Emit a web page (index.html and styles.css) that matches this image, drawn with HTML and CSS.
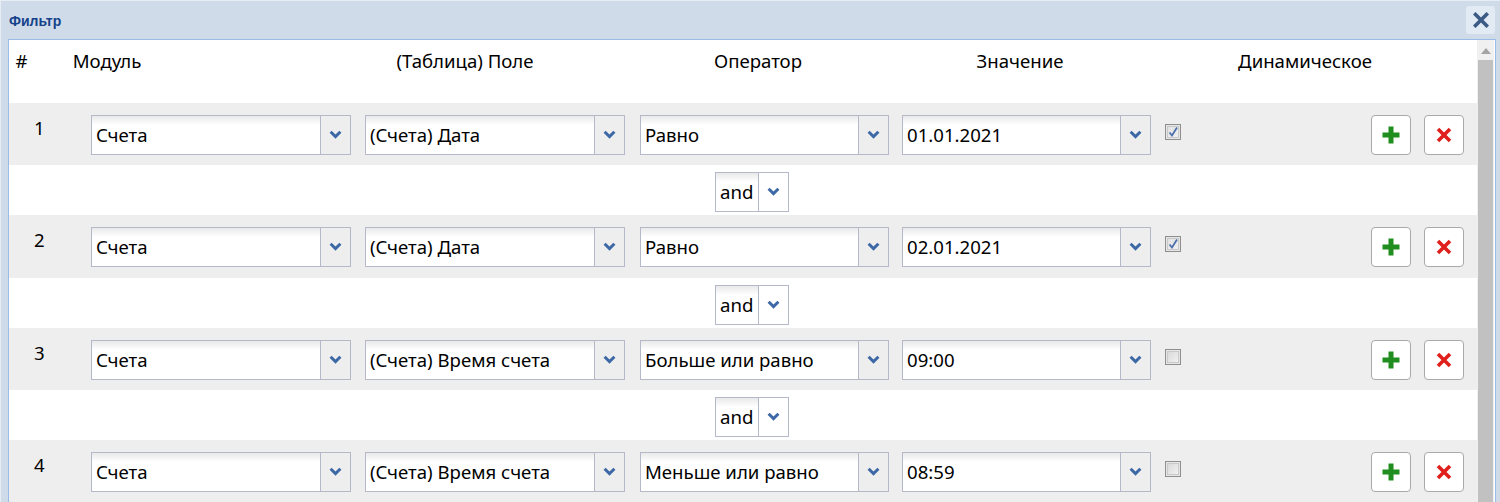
FILE: index.html
```html
<!DOCTYPE html>
<html lang="ru">
<head>
<meta charset="utf-8">
<title>Фильтр</title>
<link rel="stylesheet" href="styles.css">
</head>
<body>
<div class="window">
  <div class="titlebar">
    <span class="title">Фильтр</span>
    <button class="close" type="button" aria-label="Закрыть">
      <svg width="16" height="16" viewBox="0 0 16 16"><path d="M2.5 2.5L13.5 13.5M13.5 2.5L2.5 13.5" stroke="#3b5b86" stroke-width="3.6" stroke-linecap="square" fill="none"/></svg>
    </button>
  </div>
  <div class="panel">
    <div class="content">
      <div class="head">
        <div class="h h-num">#</div>
        <div class="h h-mod">Модуль</div>
        <div class="h h-field">(Таблица) Поле</div>
        <div class="h h-op">Оператор</div>
        <div class="h h-val">Значение</div>
        <div class="h h-dyn">Динамическое</div>
      </div>

      <div class="row">
        <div class="num">1</div>
        <div class="combo c-mod"><span class="val">Счета</span><span class="trig"></span></div>
        <div class="combo c-field"><span class="val">(Счета) Дата</span><span class="trig"></span></div>
        <div class="combo c-op"><span class="val">Равно</span><span class="trig"></span></div>
        <div class="combo c-val"><span class="val">01.01.2021</span><span class="trig"></span></div>
        <div class="chk checked"><svg width="12" height="12" viewBox="0 0 12 12"><path d="M2.5 6.5L5 9.5L10 1.5" stroke="#4d6fae" stroke-width="1.8" fill="none"/></svg></div>
        <div class="spacer"></div>
        <button class="btn" type="button"><svg width="20" height="20" viewBox="0 0 20 20"><path d="M10 1.5V18.5M1.5 10H18.5" stroke="#1f8e1f" stroke-width="5" fill="none"/></svg></button>
        <button class="btn btn-del" type="button"><svg width="16" height="16" viewBox="0 0 16 16"><path d="M2 2L14 14M14 2L2 14" stroke="#e0201c" stroke-width="3.6" fill="none"/></svg></button>
      </div>
      <div class="link">
        <div class="combo c-and"><span class="val">and</span><span class="trig"></span></div>
      </div>

      <div class="row row-tall">
        <div class="num">2</div>
        <div class="combo c-mod"><span class="val">Счета</span><span class="trig"></span></div>
        <div class="combo c-field"><span class="val">(Счета) Дата</span><span class="trig"></span></div>
        <div class="combo c-op"><span class="val">Равно</span><span class="trig"></span></div>
        <div class="combo c-val"><span class="val">02.01.2021</span><span class="trig"></span></div>
        <div class="chk checked"><svg width="12" height="12" viewBox="0 0 12 12"><path d="M2.5 6.5L5 9.5L10 1.5" stroke="#4d6fae" stroke-width="1.8" fill="none"/></svg></div>
        <div class="spacer"></div>
        <button class="btn" type="button"><svg width="20" height="20" viewBox="0 0 20 20"><path d="M10 1.5V18.5M1.5 10H18.5" stroke="#1f8e1f" stroke-width="5" fill="none"/></svg></button>
        <button class="btn btn-del" type="button"><svg width="16" height="16" viewBox="0 0 16 16"><path d="M2 2L14 14M14 2L2 14" stroke="#e0201c" stroke-width="3.6" fill="none"/></svg></button>
      </div>
      <div class="link">
        <div class="combo c-and"><span class="val">and</span><span class="trig"></span></div>
      </div>

      <div class="row">
        <div class="num">3</div>
        <div class="combo c-mod"><span class="val">Счета</span><span class="trig"></span></div>
        <div class="combo c-field"><span class="val">(Счета) Время счета</span><span class="trig"></span></div>
        <div class="combo c-op"><span class="val">Больше или равно</span><span class="trig"></span></div>
        <div class="combo c-val"><span class="val">09:00</span><span class="trig"></span></div>
        <div class="chk"></div>
        <div class="spacer"></div>
        <button class="btn" type="button"><svg width="20" height="20" viewBox="0 0 20 20"><path d="M10 1.5V18.5M1.5 10H18.5" stroke="#1f8e1f" stroke-width="5" fill="none"/></svg></button>
        <button class="btn btn-del" type="button"><svg width="16" height="16" viewBox="0 0 16 16"><path d="M2 2L14 14M14 2L2 14" stroke="#e0201c" stroke-width="3.6" fill="none"/></svg></button>
      </div>
      <div class="link">
        <div class="combo c-and"><span class="val">and</span><span class="trig"></span></div>
      </div>

      <div class="row">
        <div class="num">4</div>
        <div class="combo c-mod"><span class="val">Счета</span><span class="trig"></span></div>
        <div class="combo c-field"><span class="val">(Счета) Время счета</span><span class="trig"></span></div>
        <div class="combo c-op"><span class="val">Меньше или равно</span><span class="trig"></span></div>
        <div class="combo c-val"><span class="val">08:59</span><span class="trig"></span></div>
        <div class="chk"></div>
        <div class="spacer"></div>
        <button class="btn" type="button"><svg width="20" height="20" viewBox="0 0 20 20"><path d="M10 1.5V18.5M1.5 10H18.5" stroke="#1f8e1f" stroke-width="5" fill="none"/></svg></button>
        <button class="btn btn-del" type="button"><svg width="16" height="16" viewBox="0 0 16 16"><path d="M2 2L14 14M14 2L2 14" stroke="#e0201c" stroke-width="3.6" fill="none"/></svg></button>
      </div>
    </div>
    <div class="scrollbar">
      <div class="sb-up"><svg width="10" height="6" viewBox="0 0 10 6"><path d="M0 6L5 0L10 6Z" fill="#a3a3a3"/></svg></div>
      <div class="sb-thumb"></div>
    </div>
  </div>
</div>
</body>
</html>
```

FILE: styles.css
```css
* { box-sizing: border-box; }
html, body { margin: 0; padding: 0; }
body {
  width: 1500px;
  height: 502px;
  overflow: hidden;
  background: #cfdbe8;
  font-family: "Noto Sans", "Open Sans", sans-serif;
  font-size: 18.6px;
  color: #000;
}
.window {
  width: 1500px;
  height: 502px;
  border-top: 1px solid #e6edf5;
  border-left: 1px solid #e6edf5;
  background: #cfdbe8;
  overflow: hidden;
}
.titlebar {
  height: 38px;
  display: flex;
  align-items: center;
  justify-content: space-between;
  padding-left: 8px;
  padding-right: 5px;
}
.title {
  font-family: "Liberation Sans", Arial, sans-serif;
  font-weight: bold;
  font-size: 14px;
  color: #15428b;
  margin-top: 2px;
}
.close {
  width: 29px;
  height: 28px;
  margin-top: -1px;
  border: none;
  border-radius: 3px;
  background: #e2eaf4;
  padding: 0;
  display: flex;
  align-items: center;
  justify-content: center;
}
.panel {
  margin-left: 7px;
  width: 1488px;
  height: 470px;
  border-top: 1px solid #99bbe8;
  border-left: 1px solid #99bbe8;
  border-right: 1px solid #99bbe8;
  background: #fff;
  display: flex;
}
.content {
  width: 1468px;
  flex: none;
}
.scrollbar {
  width: 17px;
  flex: none;
  background: #f0f0f0;
  display: flex;
  flex-direction: column;
}
.sb-up {
  height: 20px;
  display: flex;
  align-items: center;
  justify-content: center;
  padding-top: 2px;
}
.sb-thumb {
  flex: 1;
  margin: 0 1px;
  background: #c1c1c1;
}
.head {
  height: 63px;
  display: flex;
  align-items: flex-start;
  padding-top: 8px;
  line-height: 26px;
}
.h { text-align: center; flex: none; white-space: nowrap; }
.h-num { width: 25px; }
.h-mod { width: 146px; }
.h-field { width: 200px; margin-left: 185px; }
.h-op { width: 150px; margin-left: 118px; }
.h-val { width: 150px; margin-left: 112px; }
.h-dyn { width: 200px; margin-left: 110px; }

.row {
  height: 62px;
  background: #eeeeee;
  display: flex;
  align-items: flex-start;
}
.row-tall { height: 63px; }
.num {
  width: 82px;
  flex: none;
  padding-left: 25px;
  padding-top: 13px;
  line-height: 24px;
}
.combo {
  flex: none;
  height: 40px;
  margin-top: 12px;
  border: 1px solid #b5b8c8;
  display: flex;
  background: transparent;
}
.combo .val {
  flex: 1;
  min-width: 0;
  background: #fff linear-gradient(#e9e9e9, #fff 9px);
  padding-left: 4px;
  line-height: 38px;
  white-space: nowrap;
  overflow: hidden;
}
.combo .trig {
  width: 30px;
  flex: none;
  border-left: 1px solid #b5b8c8;
  background-image: url("data:image/svg+xml,%3Csvg xmlns='http://www.w3.org/2000/svg' width='13' height='9' viewBox='0 0 13 9'%3E%3Cpath d='M1.6 1.8L6.5 6.6L11.4 1.8' stroke='%233d68a6' stroke-width='3' fill='none'/%3E%3C/svg%3E");
  background-repeat: no-repeat;
  background-position: center 14px;
}
.c-mod { width: 260px; }
.c-field { width: 260px; margin-left: 14px; }
.c-op { width: 249px; margin-left: 15px; }
.c-val { width: 249px; margin-left: 13px; }
.chk {
  flex: none;
  width: 16px;
  height: 16px;
  margin-top: 21px;
  margin-left: 14px;
  border: 1px solid #8e8e8e;
  background: linear-gradient(135deg, #d4d4d4, #f6f6f6);
  box-shadow: inset 0 0 0 1px #e6e6e6, inset 0 0 0 2px #c9c9c9;
  display: flex;
  align-items: center;
  justify-content: center;
}
.chk.checked { background: linear-gradient(135deg, #dedede, #f3f3f3); }
.spacer { flex: 1; }
.btn {
  flex: none;
  width: 40px;
  height: 40px;
  margin-top: 12px;
  padding: 0;
  border: 1px solid #a9a9a9;
  border-radius: 4px;
  background: #fff;
  display: flex;
  align-items: center;
  justify-content: center;
}
.btn-del { margin-left: 13px; margin-right: 13px; }
.link {
  height: 50px;
  display: flex;
  align-items: flex-start;
  padding-top: 7px;
  padding-left: 706px;
}
.c-and { width: 74px; margin-top: 0; }
.c-and .trig { width: 30px; }
```
